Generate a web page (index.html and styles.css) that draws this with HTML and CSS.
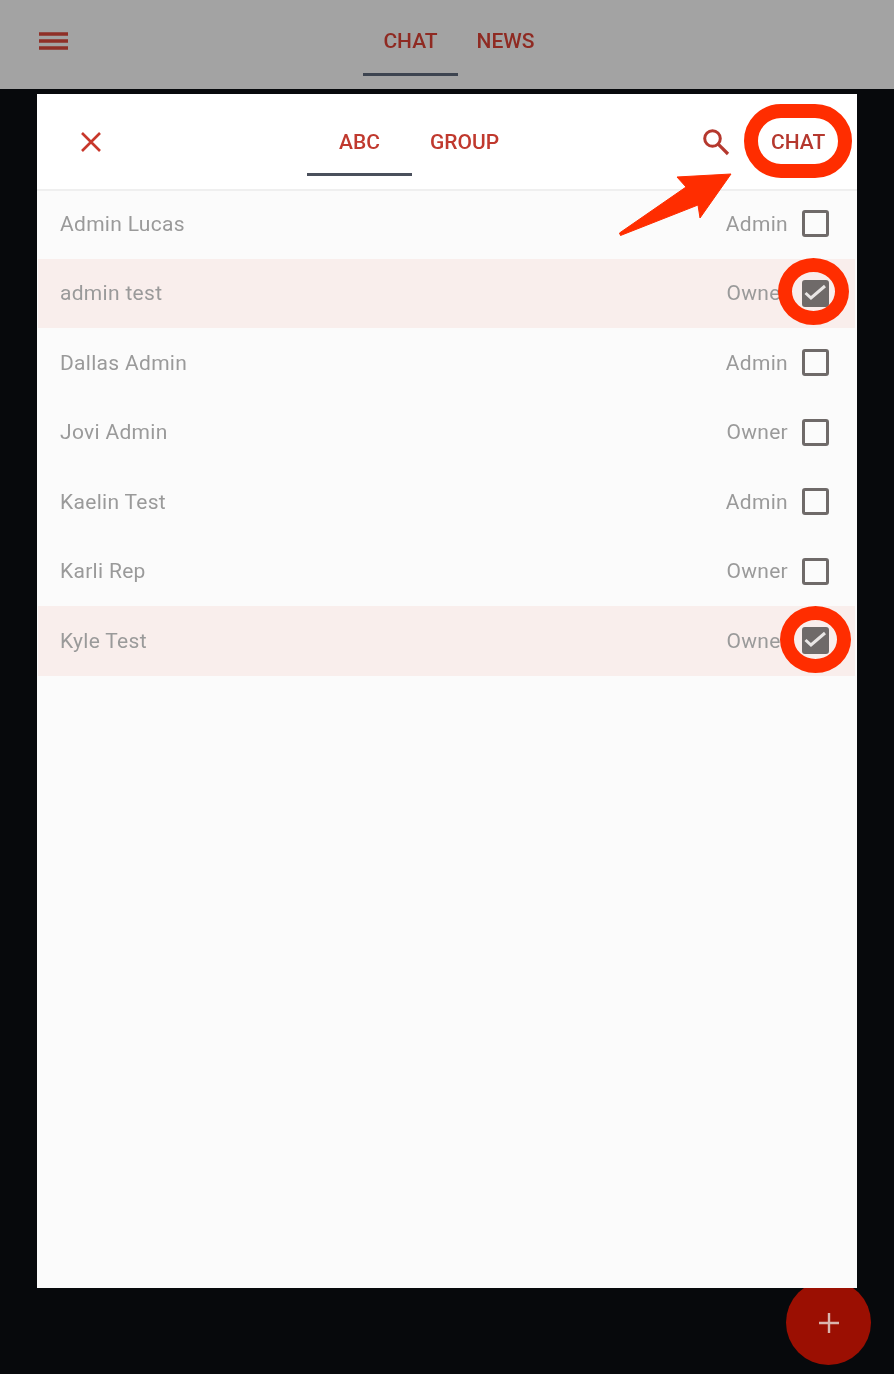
FILE: index.html
```html
<!DOCTYPE html>
<html lang="en">
<head>
  <meta charset="UTF-8">
  <meta name="viewport" content="width=device-width, initial-scale=1.0">
  <title>New Chat</title>
  <link rel="stylesheet" href="styles.css">
</head>
<body>
  <header class="topbar">
    <svg class="menu-icon" width="31" height="20" viewBox="0 0 31 20">
      <path d="M2 3h29M2 10h29M2 17h29" stroke="#8f2f27" stroke-width="3.6" fill="none"/>
    </svg>
    <nav class="tabs top-tabs">
      <span class="tab active">CHAT</span>
      <span class="tab">NEWS</span>
    </nav>
  </header>

  <div class="fab">
    <svg width="22" height="22" viewBox="0 0 22 22"><path d="M11 1v20M1 11h20" stroke="#d9b5ae" stroke-width="2.4" fill="none"/></svg>
  </div>

  <section class="panel">
    <div class="panel-head">
      <svg class="close-icon" width="24" height="24" viewBox="0 0 24 24">
        <path d="M3 3l18 18M21 3L3 21" stroke="#c8372b" stroke-width="2.6" fill="none"/>
      </svg>
      <nav class="tabs panel-tabs">
        <span class="tab active">ABC</span>
        <span class="tab">GROUP</span>
      </nav>
      <svg class="search-icon" width="28" height="28" viewBox="0 0 28 28">
        <circle cx="10.5" cy="10.5" r="7.8" stroke="#b5382e" stroke-width="3" fill="none"/>
        <path d="M16.2 16.2L26 26" stroke="#b5382e" stroke-width="3.2" fill="none"/>
      </svg>
      <span class="chat-btn">CHAT</span>
    </div>

    <ul class="people">
      <li class="person"><span class="name">Admin Lucas</span><span class="role">Admin</span><span class="check"></span></li>
      <li class="person picked"><span class="name">admin test</span><span class="role">Owner</span>
        <span class="check on"><svg width="27" height="27" viewBox="0 0 27 27"><path d="M3.500 13l5.500 5L23 6" stroke="#e9e6e5" stroke-width="3" fill="none"/></svg></span></li>
      <li class="person"><span class="name">Dallas Admin</span><span class="role">Admin</span><span class="check"></span></li>
      <li class="person"><span class="name">Jovi Admin</span><span class="role">Owner</span><span class="check"></span></li>
      <li class="person"><span class="name">Kaelin Test</span><span class="role">Admin</span><span class="check"></span></li>
      <li class="person"><span class="name">Karli Rep</span><span class="role">Owner</span><span class="check"></span></li>
      <li class="person picked"><span class="name">Kyle Test</span><span class="role">Owner</span>
        <span class="check on"><svg width="27" height="27" viewBox="0 0 27 27"><path d="M3.500 13l5.500 5L23 6" stroke="#e9e6e5" stroke-width="3" fill="none"/></svg></span></li>
    </ul>
  </section>

  <!-- red markup drawn over the screenshot -->
  <span class="ring ring-chat"></span>
  <span class="ring ring-one"></span>
  <span class="ring ring-two"></span>
  <svg class="arrow" width="116" height="68" viewBox="0 0 116 68">
    <path d="M1.500 63L68 17 59 7 113 4 82 48 80 35 2.500 65.500Z" fill="#ff2d00" stroke="#ff2d00" stroke-width="1" stroke-linejoin="round"/>
  </svg>
</body>
</html>
```

FILE: styles.css
```css
* {
  box-sizing: border-box;
  font-family: Roboto, sans-serif;
}

body {
  margin: 0;
  height: 1374px;
  position: relative;
  overflow: hidden;
  background-color: #07090c;
}

/**
 * Top bar
 */
.topbar {
  height: 89px;
  padding-left: 37px;
  display: flex;
  align-items: center;
  background-color: #a3a3a3;
  filter: blur(0.5px);
}

.menu-icon {
  flex: none;
  margin-bottom: 7px;
}

.tabs {
  display: flex;
  align-self: stretch;
}

.tab {
  display: flex;
  align-items: center;
  justify-content: center;
  font-size: 21px;
  font-weight: 500;
  border-bottom: 3px solid transparent;
}

.top-tabs {
  margin-left: 295px;
  padding-bottom: 13px;
}

.top-tabs .tab {
  width: 95px;
  padding-top: 8px;
  color: #8f2a22;
}

.top-tabs .active {
  border-bottom-color: #3d4450;
}

/**
 * Panel
 */
.panel {
  width: 820px;
  height: 1194px;
  margin: 5px 0 0 37px;
  position: relative;
  background-color: #fbfbfb;
  filter: blur(0.5px);
}

.panel-head {
  height: 95px;
  padding-left: 42px;
  display: flex;
  align-items: center;
  background-color: #fff;
  box-shadow: 0 2px 0 #efefef;
}

.close-icon {
  flex: none;
}

.panel-tabs {
  margin-left: 204px;
  padding-bottom: 13px;
}

.panel-tabs .tab {
  width: 105px;
  padding-top: 16px;
  color: #c0392e;
}

.panel-tabs .active {
  border-bottom-color: #4a505c;
}

.search-icon {
  margin-left: 185px;
  flex: none;
}

.chat-btn {
  margin-left: 41px;
  font-size: 21px;
  font-weight: 500;
  color: #b5382e;
}

/**
 * List
 */
.people {
  margin: 0;
  padding: 0;
  list-style: none;
}

.person {
  height: 69.500px;
  margin: 0 2px 0 1px;
  padding: 0 26px 0 22px;
  display: flex;
  align-items: center;
  font-size: 21px;
  letter-spacing: 0.3px;
  color: #9a9a9a;
}

.picked {
  background-color: #f9eeec;
}

.name {
  flex: 1;
}

.role {
  margin-right: 14px;
}

.check {
  width: 27px;
  height: 27px;
  flex: none;
  border: 3px solid #6f6a69;
  border-radius: 3px;
}

.check.on {
  position: relative;
  background-color: #6f6a69;
}

.check svg {
  position: absolute;
  top: -3px;
  left: -3px;
}

/**
 * Things over the page
 */
.fab {
  position: absolute;
  left: 786px;
  top: 1280px;
  width: 85px;
  height: 85px;
  display: flex;
  align-items: center;
  justify-content: center;
  border-radius: 50%;
  background-color: #9b0f02;
}

.ring {
  position: absolute;
  border: 14px solid #ff2d00;
}

.ring-chat {
  left: 744px;
  top: 104px;
  width: 108px;
  height: 74px;
  border-radius: 37px;
}

.ring-one,
.ring-two {
  width: 71px;
  height: 67px;
  border-radius: 50%;
}

.ring-one {
  left: 778px;
  top: 258px;
}

.ring-two {
  left: 780px;
  top: 606px;
}

.arrow {
  position: absolute;
  left: 618px;
  top: 170px;
}
```
